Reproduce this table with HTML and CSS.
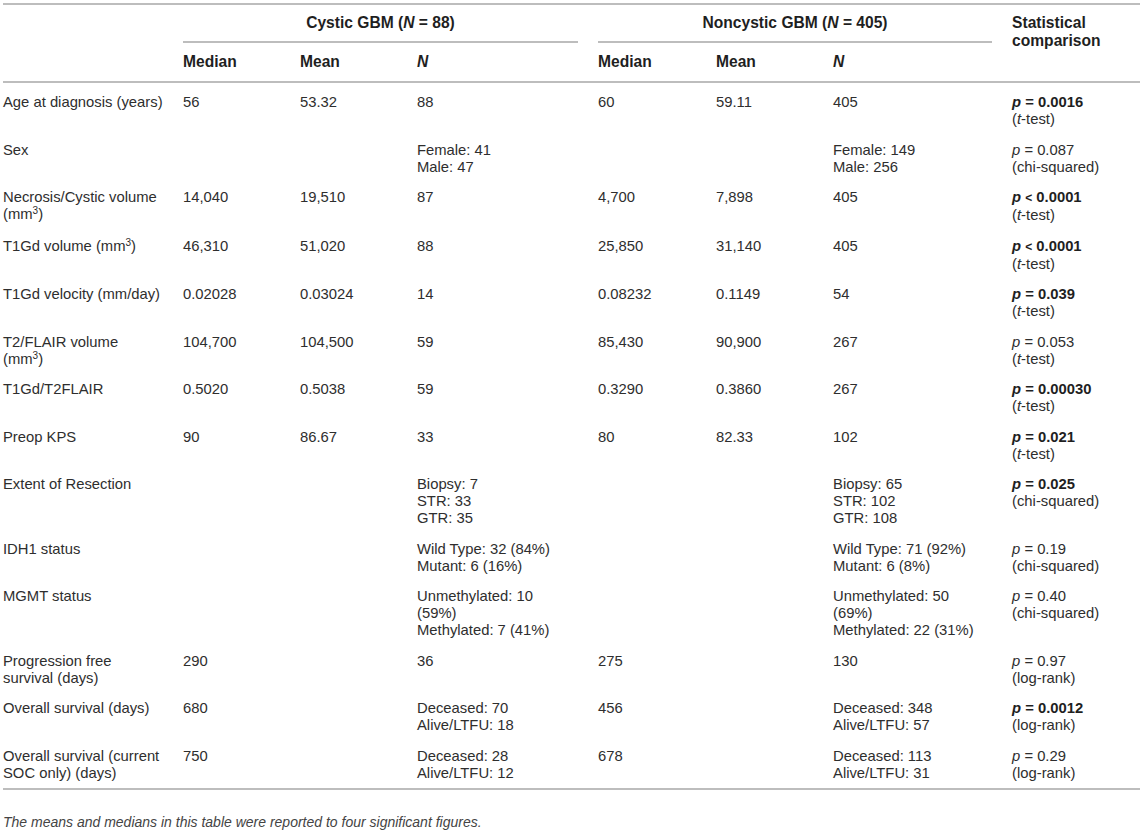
FILE: index.html
```html
<!DOCTYPE html>
<html lang="en">
<head>
<meta charset="utf-8">
<title>Cystic vs Noncystic GBM</title>
<link rel="stylesheet" href="styles.css">
</head>
<body>
<div class="page">
<table class="tbl">
<colgroup>
<col class="c-label"><col class="c-med"><col class="c-mean"><col class="c-n">
<col class="c-med2"><col class="c-mean"><col class="c-n2"><col class="c-stat">
</colgroup>
<thead>
<tr class="h1">
<th rowspan="2"></th>
<th colspan="3" class="grp"><div class="grp-line">Cystic GBM (<i>N</i> = 88)</div></th>
<th colspan="3" class="grp"><div class="grp-line">Noncystic GBM (<i>N</i> = 405)</div></th>
<th rowspan="2" class="stat-h">Statistical<br>comparison</th>
</tr>
<tr class="h2">
<th>Median</th><th>Mean</th><th><i>N</i></th>
<th>Median</th><th>Mean</th><th><i>N</i></th>
</tr>
</thead>
<tbody>
<tr><td>Age at diagnosis (years)</td><td>56</td><td>53.32</td><td>88</td><td>60</td><td>59.11</td><td>405</td><td><b><i>p</i> = 0.0016</b><br>(<i>t</i>-test)</td></tr>
<tr><td>Sex</td><td></td><td></td><td>Female: 41<br>Male: 47</td><td></td><td></td><td>Female: 149<br>Male: 256</td><td><i>p</i> = 0.087<br>(chi-squared)</td></tr>
<tr><td>Necrosis/Cystic volume<br>(mm<sup>3</sup>)</td><td>14,040</td><td>19,510</td><td>87</td><td>4,700</td><td>7,898</td><td>405</td><td><b><i>p</i> <span class="lt">&lt;</span> 0.0001</b><br>(<i>t</i>-test)</td></tr>
<tr><td>T1Gd volume (mm<sup>3</sup>)</td><td>46,310</td><td>51,020</td><td>88</td><td>25,850</td><td>31,140</td><td>405</td><td><b><i>p</i> <span class="lt">&lt;</span> 0.0001</b><br>(<i>t</i>-test)</td></tr>
<tr><td>T1Gd velocity (mm/day)</td><td>0.02028</td><td>0.03024</td><td>14</td><td>0.08232</td><td>0.1149</td><td>54</td><td><b><i>p</i> = 0.039</b><br>(<i>t</i>-test)</td></tr>
<tr><td>T2/FLAIR volume<br>(mm<sup>3</sup>)</td><td>104,700</td><td>104,500</td><td>59</td><td>85,430</td><td>90,900</td><td>267</td><td><i>p</i> = 0.053<br>(<i>t</i>-test)</td></tr>
<tr><td>T1Gd/T2FLAIR</td><td>0.5020</td><td>0.5038</td><td>59</td><td>0.3290</td><td>0.3860</td><td>267</td><td><b><i>p</i> = 0.00030</b><br>(<i>t</i>-test)</td></tr>
<tr><td>Preop KPS</td><td>90</td><td>86.67</td><td>33</td><td>80</td><td>82.33</td><td>102</td><td><b><i>p</i> = 0.021</b><br>(<i>t</i>-test)</td></tr>
<tr><td>Extent of Resection</td><td></td><td></td><td>Biopsy: 7<br>STR: 33<br>GTR: 35</td><td></td><td></td><td>Biopsy: 65<br>STR: 102<br>GTR: 108</td><td><b><i>p</i> = 0.025</b><br>(chi-squared)</td></tr>
<tr><td>IDH1 status</td><td></td><td></td><td>Wild Type: 32 (84%)<br>Mutant: 6 (16%)</td><td></td><td></td><td>Wild Type: 71 (92%)<br>Mutant: 6 (8%)</td><td><i>p</i> = 0.19<br>(chi-squared)</td></tr>
<tr><td>MGMT status</td><td></td><td></td><td>Unmethylated: 10<br>(59%)<br>Methylated: 7 (41%)</td><td></td><td></td><td>Unmethylated: 50<br>(69%)<br>Methylated: 22 (31%)</td><td><i>p</i> = 0.40<br>(chi-squared)</td></tr>
<tr><td>Progression free<br>survival (days)</td><td>290</td><td></td><td>36</td><td>275</td><td></td><td>130</td><td><i>p</i> = 0.97<br>(log-rank)</td></tr>
<tr><td>Overall survival (days)</td><td>680</td><td></td><td>Deceased: 70<br>Alive/LTFU: 18</td><td>456</td><td></td><td>Deceased: 348<br>Alive/LTFU: 57</td><td><b><i>p</i> = 0.0012</b><br>(log-rank)</td></tr>
<tr><td>Overall survival (current<br>SOC only) (days)</td><td>750</td><td></td><td>Deceased: 28<br>Alive/LTFU: 12</td><td>678</td><td></td><td>Deceased: 113<br>Alive/LTFU: 31</td><td><i>p</i> = 0.29<br>(log-rank)</td></tr>
</tbody>
</table>
<p class="note">The means and medians in this table were reported to four significant figures.</p>
</div>
</body>
</html>
```
FILE: styles.css
```css
html, body {
  margin: 0;
  padding: 0;
  background: #ffffff;
}
.page {
  padding: 3px 3px 0 3px;
  font-family: "Liberation Sans", Arial, Helvetica, sans-serif;
  color: #2e2e2e;
  font-size: 14.8px;
  line-height: 17px;
}
.tbl {
  width: 1137px;
  table-layout: fixed;
  border-collapse: collapse;
  border-top: 2px solid #bdbdbd;
  border-bottom: 2px solid #bdbdbd;
}
.c-label { width: 180px; }
.c-med { width: 117px; }
.c-mean { width: 117px; }
.c-n { width: 181px; }
.c-med2 { width: 118px; }
.c-n2 { width: 179px; }
.c-stat { width: 128px; }
.tbl th, .tbl td {
  text-align: left;
  vertical-align: top;
  padding: 7px 20px 6.5px 0;
  white-space: nowrap;
}
.tbl th {
  font-weight: bold;
  font-size: 15.6px;
  color: #1f1f1f;
}
.tbl .h1 th {
  padding-top: 9px;
  padding-bottom: 0;
}
.tbl .h1 th.stat-h {
  line-height: 18px;
  padding-top: 9px;
}
.tbl .grp {
  text-align: center;
}
.grp-line {
  border-bottom: 2px solid #bdbdbd;
  padding-bottom: 10px;
}
.tbl .h2 th {
  padding-top: 10px;
  padding-bottom: 11px;
}
.tbl thead {
  border-bottom: 2px solid #bdbdbd;
}
.tbl tbody tr:first-child td {
  padding-top: 11px;
}
.tbl sup {
  font-size: 10px;
  line-height: 0;
  vertical-align: 5px;
}
.tbl b {
  color: #1f1f1f;
}
.lt {
  font-size: 12px;
}
.note {
  margin: 24px 0 0 0;
  font-style: italic;
  font-size: 14px;
  color: #444;
}
```
